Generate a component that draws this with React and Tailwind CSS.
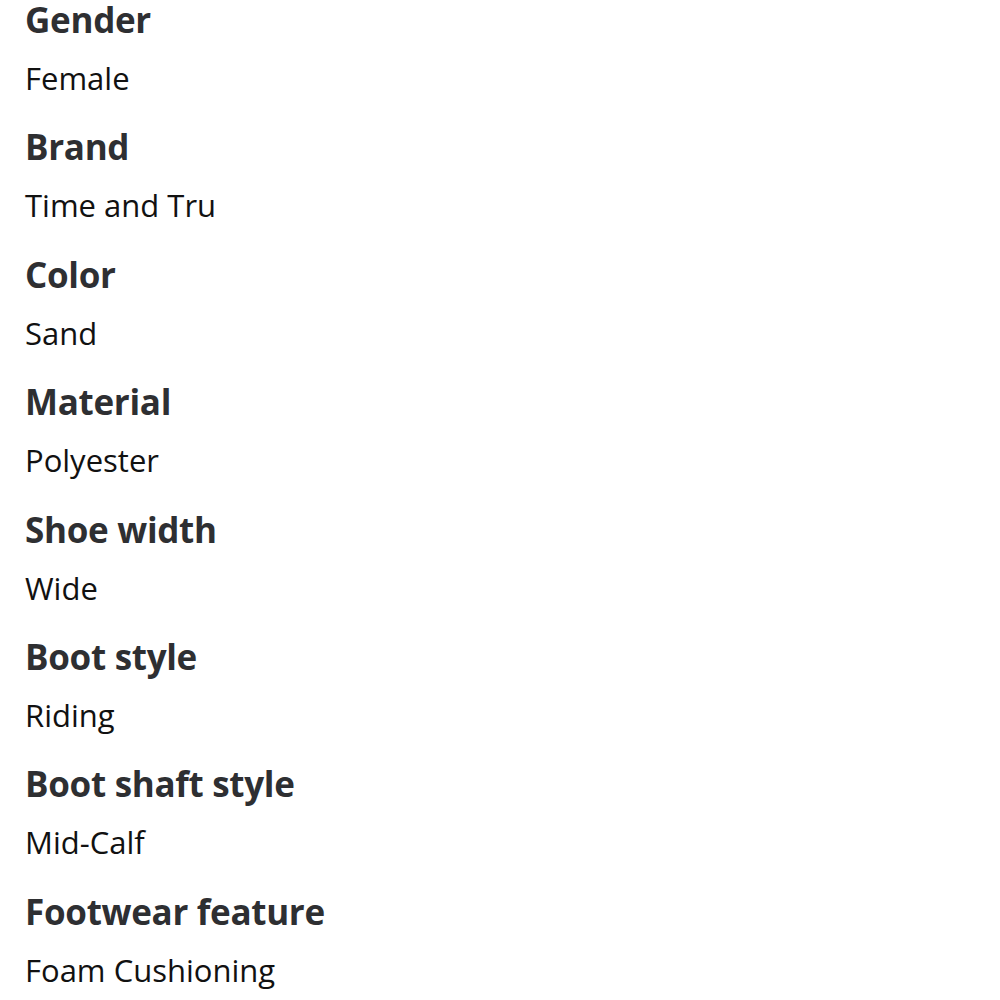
export default function App() {
  const items = [
    ["Gender", "Female"],
    ["Brand", "Time and Tru"],
    ["Color", "Sand"],
    ["Material", "Polyester"],
    ["Shoe width", "Wide"],
    ["Boot style", "Riding"],
    ["Boot shaft style", "Mid-Calf"],
    ["Footwear feature", "Foam Cushioning"],
  ];
  return (
    <div className="w-[1000px] h-[1000px] bg-white overflow-hidden pl-[25px]" style={{ fontFamily: '"Open Sans", sans-serif' }}>
      {items.map(([k, v]) => (
        <div key={k} className="h-[127.4px]">
          <div className="h-[40px] leading-[40px] text-[35px] font-bold text-[#2e2f32] tracking-[-0.3px]">{k}</div>
          <div className="mt-[18px] h-[40px] leading-[40px] text-[31px] text-[#111111]">{v}</div>
        </div>
      ))}
    </div>
  );
}
